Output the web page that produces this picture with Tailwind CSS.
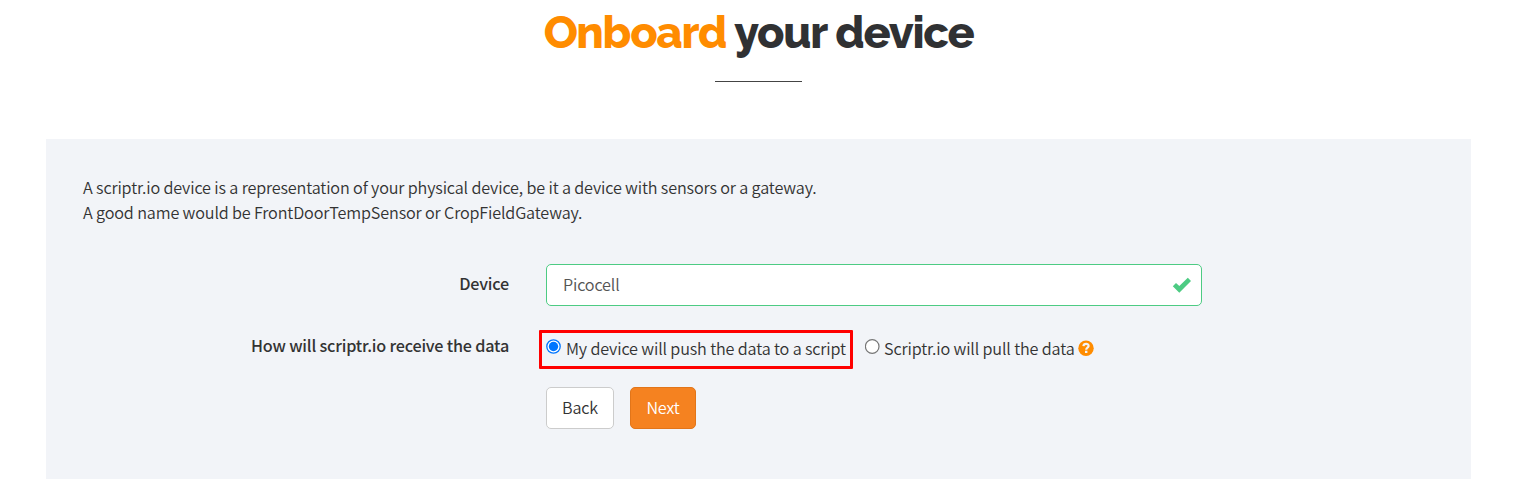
<!DOCTYPE html>
<html lang="en">
<head>
<meta charset="utf-8">
<title>Onboard your device</title>
<script src="https://cdn.jsdelivr.net/npm/@tailwindcss/browser@4"></script>
</head>
<body class="h-[500px] overflow-hidden bg-white font-['Noto_Sans_CJK_SC',sans-serif] text-[16.2px] font-[350] leading-[25px] tracking-[-0.152px] text-[#333]">
<header class="flex h-[139px] flex-col items-center pr-[7px]">
  <h1 class="h-[81px] whitespace-nowrap pt-[6px] font-['Raleway','Lato',sans-serif] text-[45px] font-extrabold leading-[54px] tracking-[-1.26px] text-[#303133]"><span class="text-[#ff8c00]">Onboard</span> your device</h1>
  <div class="h-px w-[87px] bg-[#444]"></div>
</header>
<main class="ml-[46px] h-[340px] w-[1425px] bg-[#f2f4f8] pt-[36px]">
  <p class="ml-[37px] whitespace-nowrap"><span>A scriptr.io device is a representation of your physical device, be it a device with sensors or a gateway.</span><br><span>A good name would be FrontDoorTempSensor or CropFieldGateway.</span></p>
  <form class="mt-[39px]">
    <div class="flex h-[42px] items-center">
      <label class="mr-[37px] w-[463px] pb-[3px] text-right font-medium tracking-[-0.2px]"><span>Device</span></label>
      <div class="flex h-[42px] w-[656px] items-center justify-between rounded-[5px] border border-[#4dcb83] bg-white pl-[16px] pr-[9px] text-[#555]">
        <span class="pb-[2px]">Picocell</span>
        <svg class="h-[16px] w-[20px]" viewBox="0 0 20 16"><path fill="#4dcb83" d="M.8 9.2 4 6 7.3 9.1 15.8.7 19 4 7.3 15.7Z"/></svg>
      </div>
    </div>
    <div class="mt-[24px] flex h-[39px]">
      <label class="mr-[30px] w-[463px] pt-[3px] text-right font-medium tracking-[-0.2px]"><span>How will scriptr.io receive the data</span></label>
      <div class="flex h-[39px] w-[314px] rounded-[1px] border-3 border-[#ff0000] pl-[4px] pt-[3px]">
        <svg class="mt-[3px] h-[15px] w-[15px] shrink-0" viewBox="0 0 15 15"><circle cx="7.5" cy="7.5" r="6.7" fill="white" stroke="#0075ff" stroke-width="1.3"/><circle cx="7.5" cy="7.5" r="4.7" fill="#0075ff"/></svg>
        <span class="ml-[5px] whitespace-nowrap">My device will push the data to a script</span>
      </div>
      <div class="ml-[12px] flex pt-[6px]">
        <svg class="mt-[3px] h-[15px] w-[15px] shrink-0" viewBox="0 0 15 15"><circle cx="7.2" cy="7.5" r="6.8" fill="white" stroke="#767676" stroke-width="1.2"/></svg>
        <span class="ml-[4px] w-[194px] whitespace-nowrap">Scriptr.io will pull the data</span>
        <svg class="mt-[4px] h-[16px] w-[16px]" viewBox="0 0 16 16"><circle cx="8" cy="8.2" r="7.7" fill="#ff8c00"/><path d="M5.4 6.2C5.8 3.2 10.6 3.3 10.6 6 10.6 7.7 8.2 7.7 8.2 9.7" fill="none" stroke="#f2f4f8" stroke-width="2.2"/><path d="M7 10.7h2.4v2.3H7z" fill="#f2f4f8"/></svg>
      </div>
    </div>
    <div class="ml-[500px] mt-[18px] flex gap-[16px]">
      <button type="button" class="h-[42px] w-[68px] rounded-[5px] border border-[#ccc] bg-white pb-[2px]"><span>Back</span></button>
      <button type="button" class="h-[42px] w-[66px] rounded-[5px] border border-[#e27519] bg-[#f58220] pb-[2px] text-white"><span>Next</span></button>
    </div>
  </form>
</main>
</body>
</html>
